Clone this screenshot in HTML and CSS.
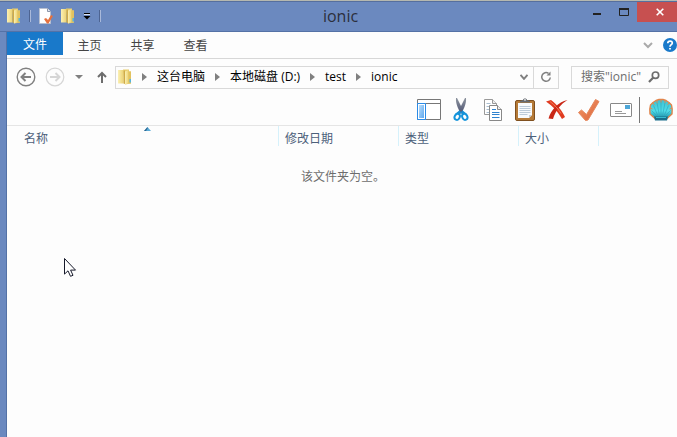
FILE: index.html
```html
<!DOCTYPE html>
<html lang="zh-CN">
<head>
  <meta charset="UTF-8">
  <meta name="viewport" content="width=device-width, initial-scale=1">
  <title>ionic</title>
  <link rel="stylesheet" href="styles.css">
</head>
<body>
  <!-- shared icons -->
  <svg class="defs" width="0" height="0">
    <defs>
      <linearGradient id="gold" x1="0" x2="1" y1="0" y2="0">
        <stop offset="0" stop-color="#fbf0b4"/>
        <stop offset="1" stop-color="#ecd272"/>
      </linearGradient>
      <linearGradient id="orange" x1="0" x2="1" y1="0" y2="1">
        <stop offset="0" stop-color="#f59a68"/>
        <stop offset="1" stop-color="#d9623a"/>
      </linearGradient>
      <linearGradient id="pane" x1="0" x2="1" y1="0" y2="1">
        <stop offset="0" stop-color="#b9dcfa"/>
        <stop offset="1" stop-color="#5fa9ef"/>
      </linearGradient>
      <linearGradient id="blade" x1="0" x2="0" y1="0" y2="1">
        <stop offset="0" stop-color="#8e959f"/>
        <stop offset="1" stop-color="#4a5070"/>
      </linearGradient>
      <linearGradient id="shell" x1="0" x2="0" y1="0" y2="1">
        <stop offset="0" stop-color="#3cc0d2"/>
        <stop offset=".6" stop-color="#4fdce8"/>
        <stop offset="1" stop-color="#1c8ea8"/>
      </linearGradient>
      <symbol id="folder" viewBox="0 0 14 16">
        <path d="M5 .5h6v2h2v12l-6 1z" fill="#e9cd6c"/>
        <path d="M0 1h5.500v13.500H0z" fill="url(#gold)"/>
        <path d="M5.500 1.500H7V15l-1.500-.5z" fill="#cfab48"/>
        <path d="M7 2.500l3.500-1.500v13L7 15.500z" fill="url(#gold)"/>
        <path d="M10.500 2.500H13v12h-2.500z" fill="#e2c260"/>
        <path d="M11.500 10H13v3.500h-1.500z" fill="#55b4dc"/>
      </symbol>
    </defs>
  </svg>

  <div class="window">
    <header class="titlebar">
      <div class="quick">
        <svg width="14" height="16"><use href="#folder"/></svg>
        <span class="quick-line first"></span>
        <button class="plain" aria-label="属性">
          <svg width="14" height="16" viewBox="0 0 14 16">
            <path d="M.5.5h8l3 3v12H.5z" fill="#fff" stroke="#b7bfd0"/>
            <path d="M8.500.5v3h3" fill="#e4e8f0" stroke="#8c96aa"/>
            <path d="M5 11l2-1 2 2 3-5 2 1-4.500 7.500H8z" fill="#e5713f"/>
          </svg>
        </button>
        <button class="plain" aria-label="新建文件夹">
          <svg width="14" height="16"><use href="#folder"/></svg>
        </button>
        <button class="plain" aria-label="自定义快速访问工具栏">
          <svg width="8" height="8" viewBox="0 0 8 8">
            <path d="M1 1.500h6" stroke="#000"/>
            <path d="M1 2.500h6" stroke="#dce4f2"/>
            <path d="M.5 4h7L4 7.500z" fill="#000"/>
          </svg>
        </button>
        <span class="quick-line"></span>
      </div>
      <h1 class="title">ionic</h1>
      <div class="controls">
        <button class="control" aria-label="最小化">
          <svg width="10" height="10" viewBox="0 0 10 10"><path d="M1 6h8v2H1z" fill="#222"/></svg>
        </button>
        <button class="control" aria-label="最大化">
          <svg width="10" height="8" viewBox="0 0 10 8"><path d="M.5 1v6.500h9V1" fill="none" stroke="#222"/><path d="M0 0h10v2H0z" fill="#222"/></svg>
        </button>
        <button class="control close" aria-label="关闭">
          <svg width="8" height="8" viewBox="0 0 8 8"><path d="M.7.7l6.600 6.600M7.300.7L.7 7.300" stroke="#fff" stroke-width="1.600"/></svg>
        </button>
      </div>
    </header>

    <main class="content">
      <nav class="ribbon">
        <button class="tab file">文件</button>
        <button class="tab">主页</button>
        <button class="tab">共享</button>
        <button class="tab">查看</button>
        <div class="ribbon-end">
          <button class="plain" aria-label="展开功能区">
            <svg width="10" height="7" viewBox="0 0 10 7"><path d="M1 1l4 4 4-4" fill="none" stroke="#aaa" stroke-width="2"/></svg>
          </button>
          <button class="plain" aria-label="帮助">
            <svg width="14" height="14" viewBox="0 0 14 14">
              <circle cx="7" cy="7" r="7" fill="#1979ca"/>
              <path d="M4.800 5.200C4.800 2.400 9.300 2.400 9.300 5 9.300 6.700 7 6.700 7 8.800" fill="none" stroke="#fff" stroke-width="1.700"/>
              <path d="M6.100 9.900h1.800v1.700H6.100z" fill="#fff"/>
            </svg>
          </button>
        </div>
      </nav>

      <div class="navbar">
        <button class="plain" aria-label="返回">
          <svg width="20" height="20" viewBox="0 0 20 20" fill="none" stroke="#808080">
            <circle cx="10" cy="10" r="8.800" stroke-width="1.400"/>
            <path d="M5.500 10H15M9.500 6l-4 4 4 4" stroke-width="2"/>
          </svg>
        </button>
        <button class="plain forward" aria-label="前进">
          <svg width="20" height="20" viewBox="0 0 20 20" fill="none" stroke="#d6d6d6">
            <circle cx="10" cy="10" r="8.800" stroke-width="1.200"/>
            <path d="M5 10h9.500M10.500 6l4 4-4 4" stroke-width="2"/>
          </svg>
        </button>
        <button class="plain recent" aria-label="最近浏览的位置">
          <svg width="8" height="4" viewBox="0 0 8 4"><path d="M0 0h8L4 4z" fill="#808080"/></svg>
        </button>
        <button class="plain up" aria-label="上移">
          <svg width="10" height="13" viewBox="0 0 10 13"><path d="M5 12V2M1 6l4-4 4 4" fill="none" stroke="#6d6d6d" stroke-width="2"/></svg>
        </button>

        <div class="address">
          <svg class="address-icon" width="14" height="16"><use href="#folder"/></svg>
          <svg class="arrow" width="5" height="8" viewBox="0 0 5 8"><path d="M0 0l5 4-5 4z"/></svg>
          <a class="crumb" href="#">这台电脑</a>
          <svg class="arrow" width="5" height="8" viewBox="0 0 5 8"><path d="M0 0l5 4-5 4z"/></svg>
          <a class="crumb" href="#">本地磁盘 (D:)</a>
          <svg class="arrow" width="5" height="8" viewBox="0 0 5 8"><path d="M0 0l5 4-5 4z"/></svg>
          <a class="crumb" href="#">test</a>
          <svg class="arrow" width="5" height="8" viewBox="0 0 5 8"><path d="M0 0l5 4-5 4z"/></svg>
          <a class="crumb" href="#">ionic</a>
          <button class="plain history" aria-label="以前的位置">
            <svg width="8" height="6" viewBox="0 0 8 6"><path d="M.5.8L4 4.800 7.500.8" fill="none" stroke="#808080" stroke-width="2"/></svg>
          </button>
          <button class="plain refresh" aria-label="刷新">
            <svg width="12" height="12" viewBox="0 0 12 12">
              <path d="M8.500 2.400A4.300 4.300 0 1 0 10.300 6.500" fill="none" stroke="#808080" stroke-width="1.500"/>
              <path d="M6.500 4.500H10.500V.5z" fill="#808080"/>
            </svg>
          </button>
        </div>

        <div class="search">
          <input class="search-input" type="text" placeholder="搜索&quot;ionic&quot;" aria-label="搜索">
          <svg width="12" height="12" viewBox="0 0 12 12" fill="none" stroke="#6d6d6d">
            <circle cx="7.500" cy="4.200" r="3.200" stroke-width="1.700"/>
            <path d="M5.300 6.500L1 11" stroke-width="2.200"/>
          </svg>
        </div>
      </div>

      <div class="toolbar">
        <button class="tool" aria-label="导航窗格">
          <svg width="24" height="24" viewBox="0 0 24 24">
            <path d="M.5 1.500h23v20H.5z" fill="#fff" stroke="#777"/>
            <path d="M1 5.500h22" stroke="#777"/>
            <path d="M.5 5.500h8v16h-8z" fill="#fff" stroke="#2b8be6"/>
            <path d="M2 7h5v13H2z" fill="url(#pane)"/>
          </svg>
        </button>
        <button class="tool" aria-label="剪切">
          <svg width="24" height="24" viewBox="0 0 24 24">
            <path d="M7 0l1 0 6 12-2 4C9 11 6.500 5 7 0z" fill="url(#blade)"/>
            <path d="M17 0l-1 0-6 12 2 4c3-5 5.500-11 5-16z" fill="url(#blade)"/>
            <path d="M11.500 13.500L8.500 16M12.500 13.500l3 2.500" stroke="#188fd4" stroke-width="3"/>
            <ellipse cx="8.200" cy="18.800" rx="2.500" ry="3.200" fill="none" stroke="#1594db" stroke-width="2" transform="rotate(25 8.200 18.800)"/>
            <ellipse cx="15.800" cy="18.800" rx="2.500" ry="3.200" fill="none" stroke="#1594db" stroke-width="2" transform="rotate(-25 15.800 18.800)"/>
          </svg>
        </button>
        <button class="tool" aria-label="复制">
          <svg width="24" height="24" viewBox="0 0 24 24">
            <path d="M3.500 1.500h8l4 4v11h-12z" fill="#fff" stroke="#999"/>
            <path d="M11.500 1.500v4h4" fill="#eee" stroke="#999"/>
            <path d="M5.500 5.500h4M5.500 8.500h4M5.500 11.500h4M5.500 14.500h4" stroke="#a9bed0"/>
            <path d="M8.500 7.500h8l4 4v11h-12z" fill="#fff" stroke="#888"/>
            <path d="M16.500 7.500v4h4" fill="#eee" stroke="#888"/>
            <path d="M11 11.500h4M11 14.500h7.500M11 16.500h7.500M11 19.500h7.500" stroke="#2f83cf"/>
          </svg>
        </button>
        <button class="tool" aria-label="粘贴">
          <svg width="24" height="24" viewBox="0 0 24 24">
            <rect x="2.500" y="2.500" width="19" height="20" rx="1.500" fill="#b57a37" stroke="#80501f"/>
            <path d="M5 5h14v12l-3 3H5z" fill="#f8fafc"/>
            <path d="M16 20v-3h3z" fill="#c6cfd8"/>
            <path d="M6.500 8.500h11M6.500 10.500h11M6.500 12.500h11M6.500 14.500h11M6.500 16.500h8" stroke="#bccbd9"/>
            <path d="M7 4.500V3l3-1c0-2 4-2 4 0l3 1v1.500z" fill="#646a70"/>
            <circle cx="12" cy="1.900" r=".8" fill="#fff"/>
          </svg>
        </button>
        <button class="tool" aria-label="删除">
          <svg width="24" height="24" viewBox="0 0 24 24">
            <path d="M1 3.500l5-1.500c5 4 11 10 14 17l-3 2C13 14 8 8 1 3.500z" fill="#e03b20"/>
            <path d="M22.500 2c-7 4-12 11-14.500 19L3.500 20.500C6 12 13 4 22.500 2z" fill="#c92716"/>
            <path d="M5 3.500c5 4 8 7 11 12" fill="none" stroke="#f07a58"/>
          </svg>
        </button>
        <button class="tool" aria-label="属性">
          <svg width="24" height="24" viewBox="0 0 24 24">
            <path d="M1.500 14.500L4.500 12l5 4.500L18.500 1.500l3.500 2L11 22l-2.500.5z" fill="url(#orange)" stroke="#e5875c" stroke-linejoin="round"/>
          </svg>
        </button>
        <button class="tool" aria-label="重命名">
          <svg width="24" height="24" viewBox="0 0 24 24">
            <rect x="1.500" y="5.500" width="21" height="13" rx=".5" fill="#fff" stroke="#888"/>
            <path d="M16 7h5v4h-5z" fill="#4da6d7"/>
            <path d="M6 13.500h7M6 15.500h11" stroke="#999"/>
          </svg>
        </button>
        <span class="tool-line"></span>
        <button class="tool" aria-label="Classic Shell">
          <svg width="24" height="24" viewBox="0 0 24 24">
            <path d="M6 20.500L1 16 .8 11 1.500 7 4 4.500 7 2.500 10 1.500h4l3 1 3 2L22.500 7l.7 4-.2 5-5 4.500z" fill="url(#shell)" stroke="#e2844a" stroke-width="1.400" stroke-linejoin="round"/>
            <path d="M12 18V3M10.500 18L8 4.500M13.500 18L16 4.500M9 18L4.500 7.500M15 18l4.500-10.500M8 18l-5.500-5.500M16 18l5.500-5.500" stroke="#2ba5bb" stroke-width=".6"/>
            <path d="M8 2.200v3M12 1.500v3M16 2.200v3M4 5l1.500 2.200M20 5l-1.500 2.200M1 10l2.500 1M23 10l-2.500 1" stroke="#d98a58"/>
            <path d="M5 18.500h14l-1 4H6z" fill="#1a6f8c"/>
            <path d="M7 19.500h10" stroke="#35bcd0"/>
          </svg>
        </button>
      </div>

      <table class="files">
        <thead>
          <tr>
            <th class="name" aria-sort="ascending">名称
              <svg class="sort" width="7" height="4" viewBox="0 0 7 4"><path d="M0 4l3.500-4L7 4z" fill="#5aaad6"/><path d="M0 4l3.500-4v1.500L2 4z" fill="#2c6690"/></svg>
            </th>
            <th class="date">修改日期</th>
            <th class="type">类型</th>
            <th class="size">大小</th>
            <th class="rest"></th>
          </tr>
        </thead>
      </table>
      <p class="empty">该文件夹为空。</p>
    </main>

    <svg class="cursor" width="13" height="20" viewBox="0 0 13 20">
      <path d="M.5.5v15.600L4 12.800l2.500 5.500 2.500-1-2.400-5.200h4.900z" fill="#fff" stroke="#171a2b"/>
    </svg>
  </div>
</body>
</html>
```

FILE: styles.css
```css
* {
  box-sizing: border-box;
}
body {
  margin: 0;
  font-family: "Open Sans", "Noto Sans CJK SC", sans-serif;
  font-size: 12px;
  line-height: 16px;
  color: #000;
}
svg {
  display: block;
  flex: none;
}
button {
  font: inherit;
  border: none;
  background: none;
  padding: 0;
}
.defs {
  position: absolute;
}
.window {
  position: relative;
  display: flex;
  flex-direction: column;
  min-height: 100vh;
  background: #6b89bf;
  border-top: 1px solid #b5b8b0;
}

/* title bar */
.titlebar {
  display: grid;
  grid-template-columns: 1fr auto 1fr;
  height: 31px;
  border-top: 1px solid #566f9e;
  border-bottom: 1px solid #5472a6;
}
.quick {
  display: flex;
  align-items: center;
  gap: 8px;
  padding: 0 0 2px 7px;
}
.quick-line {
  width: 2px;
  height: 12px;
  border-left: 1px solid #4d6492;
  border-right: 1px solid #a9b9da;
}
.title {
  margin: 0;
  padding-left: 4px;
  font-size: 16px;
  font-weight: normal;
  line-height: 28px;
  color: #2b2f3c;
}
.controls {
  display: flex;
  justify-content: flex-end;
  align-items: flex-start;
}
.control {
  display: flex;
  justify-content: center;
  align-items: center;
  width: 27px;
  height: 20px;
}
.close {
  width: 40px;
  padding-left: 6px;
  background: #c75050;
}

/* ribbon tabs */
.content {
  flex: 1;
  margin-left: 6px;
  border-left: 1px solid #5472a6;
  background: #fdfdfd;
}
.ribbon {
  display: flex;
  align-items: flex-start;
  height: 27px;
  border-bottom: 1px solid #d7d7d7;
}
.tab {
  width: 53px;
  height: 26px;
  padding-top: 2px;
  color: #444;
}
.tab.file {
  width: 56px;
  height: 23px;
  background: #1979ca;
  color: #fff;
}
.ribbon-end {
  display: flex;
  align-items: center;
  gap: 10px;
  height: 26px;
  margin-left: auto;
}

/* navigation row */
.navbar {
  display: flex;
  align-items: center;
  height: 36px;
  padding: 0 8px 0 9px;
}
.forward {
  margin-left: 9px;
}
.recent {
  margin-left: 10px;
}
.up {
  margin-left: 14px;
}
.address {
  display: flex;
  align-items: center;
  flex: 1;
  height: 23px;
  margin: 0 12px 0 8px;
  border: 1px solid #d9d9d9;
}
.address-icon {
  margin-left: 2px;
}
.arrow {
  margin: 0 10px;
  fill: #808080;
}
.crumb {
  color: #000;
  text-decoration: none;
  white-space: nowrap;
}
.history {
  margin-left: auto;
  padding: 0 5px;
}
.refresh {
  display: flex;
  justify-content: center;
  align-items: center;
  width: 25px;
  height: 21px;
  border-left: 1px solid #d9d9d9;
}
.search {
  display: flex;
  align-items: center;
  width: 98px;
  height: 23px;
  padding: 0 8px 0 9px;
  border: 1px solid #d9d9d9;
}
.search-input {
  flex: 1;
  min-width: 0;
  padding: 0;
  border: none;
  outline: none;
  background: none;
  font: inherit;
}
.search-input::placeholder {
  color: #6d6d6d;
}

/* tool icons */
.toolbar {
  display: flex;
  justify-content: flex-end;
  align-items: center;
  height: 31px;
  border-bottom: 1px solid #e5e5e5;
}
.tool {
  display: flex;
  justify-content: center;
  align-items: center;
  width: 32px;
  height: 30px;
}
.tool-line {
  width: 1px;
  height: 26px;
  margin: 0 5px 0 2px;
  background: #777;
}

/* file list */
.files {
  width: 100%;
  table-layout: fixed;
  border-collapse: separate;
  border-spacing: 0;
}
.files th {
  height: 19px;
  padding: 6px 0 0 6px;
  border-right: 1px solid #d5f1fb;
  font-weight: normal;
  line-height: 14px;
  text-align: left;
  vertical-align: top;
  color: #4c607a;
}
.files .name {
  position: relative;
  width: 272px;
  padding-left: 17px;
}
.files .date,
.files .type {
  width: 120px;
}
.files .size {
  width: 80px;
}
.files .rest {
  border-right: none;
}
.sort {
  position: absolute;
  top: 1px;
  right: 127px;
}
.empty {
  margin: 23px 0 0;
  padding-left: 2px;
  text-align: center;
  color: #6d6d6d;
}

.cursor {
  position: absolute;
  top: 257px;
  left: 64px;
}
```
